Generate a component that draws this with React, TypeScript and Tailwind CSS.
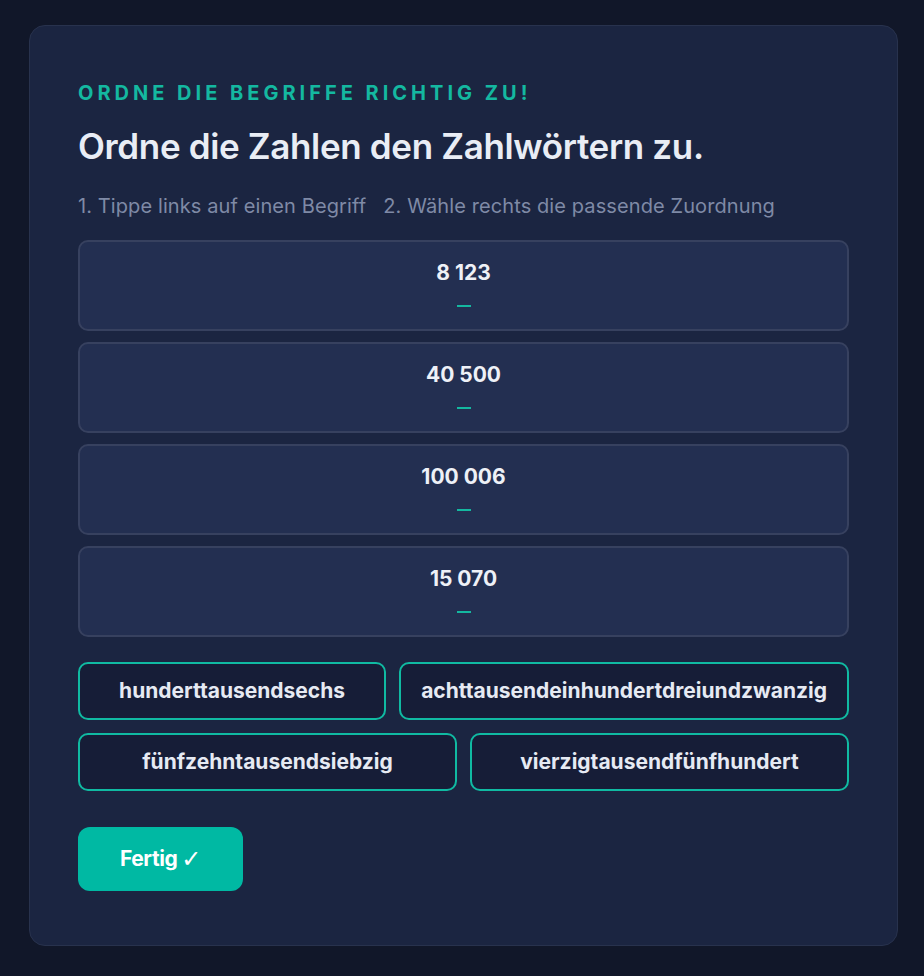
const numbers = ["8 123", "40 500", "100 006", "15 070"];

const answerRows = [
  ["hunderttausendsechs", "achttausendeinhundertdreiundzwanzig"],
  ["fünfzehntausendsiebzig", "vierzigtausendfünfhundert"],
];

export default function App() {
  return (
    <div className="min-h-[976px] bg-[#111729] pt-[25px] font-['Inter',sans-serif]">
      <div className="ml-[29px] w-[869px] rounded-[16px] border border-[#28324d] bg-[#1b2541] px-[48px] pb-[54px] pt-[53px]">
        <p className="text-[20px] font-bold uppercase leading-[28px] tracking-[0.2em] text-[#14b8a0]">
          Ordne die Begriffe richtig zu!
        </p>
        <h1 className="mt-[17px] text-[35px] font-semibold leading-[44px] tracking-[-0.01em] text-[#e9edf5]">
          Ordne die Zahlen den Zahlwörtern zu.
        </h1>
        <p className="mt-[24px] text-[20px] leading-[28px] tracking-[0.005em] text-[#7f8aa6]">
          1. Tippe links auf einen Begriff&nbsp;&nbsp; 2. Wähle rechts die passende Zuordnung
        </p>

        <div className="mt-[20px] flex flex-col gap-[11px]">
          {numbers.map((n) => (
            <div
              key={n}
              className="flex h-[91px] flex-col items-center rounded-[10px] border-2 border-[#37415f] bg-[#232f51] pt-[18px]"
            >
              <span className="text-[21px] font-bold leading-[26px] text-[#eef1f7]">{n}</span>
              <span className="mt-[19px] h-[2px] w-[14px] bg-[#14b8a0]" />
            </div>
          ))}
        </div>

        <div className="mt-[25px] flex flex-col gap-[13px]">
          {answerRows.map((row, i) => (
            <div key={i} className="flex gap-[13px]">
              {row.map((a) => (
                <button
                  key={a}
                  type="button"
                  className="h-[58px] flex-1 whitespace-nowrap rounded-[10px] border-[2.5px] border-[#10baa2] bg-[#161d37] px-[20px] text-[21px] font-bold text-[#e6eaf3]"
                >
                  {a}
                </button>
              ))}
            </div>
          ))}
        </div>

        <button
          type="button"
          className="mt-[36px] flex h-[64px] w-[165px] items-center justify-center gap-[4px] rounded-[12px] bg-[#00b9a3] text-[21px] font-bold tracking-[-0.02em] text-white"
        >
          Fertig
          <span className="font-['DejaVu_Sans',sans-serif] text-[24px] font-normal leading-none">✓</span>
        </button>
      </div>
    </div>
  );
}
